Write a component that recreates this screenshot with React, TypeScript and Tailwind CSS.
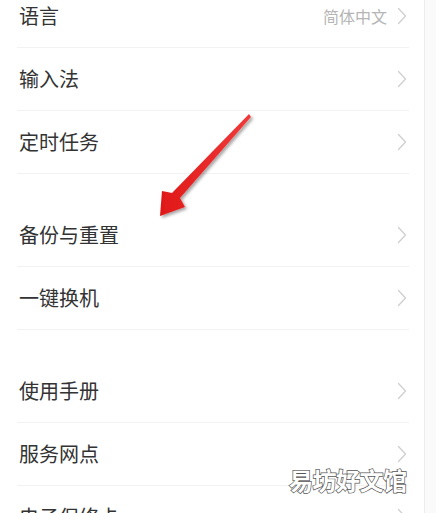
import React from "react";

const Chevron = () => (
  <svg width="10" height="18" viewBox="0 0 10 18" className="shrink-0">
    <path d="M1.5 1.5 L8.5 9 L1.5 16.5" fill="none" stroke="#cfcfcf" strokeWidth="1.3" strokeLinejoin="round" strokeLinecap="round" />
  </svg>
);

type RowProps = { label: string; value?: string };

const Row = ({ label, value }: RowProps) => (
  <div className="h-[63px] shrink-0 flex items-center justify-between border-b border-[#f2f2f2] ml-[17px] mr-[15px]">
    <span className="text-[20px] text-[#333333] ml-[2px] leading-none">{label}</span>
    <div className="flex items-center gap-[10px] mr-[2px]">
      {value && <span className="text-[16px] text-[#b5b5b5] leading-none">{value}</span>}
      <Chevron />
    </div>
  </div>
);

export default function App() {
  return (
    <div
      className="relative w-[436px] h-[513px] overflow-hidden bg-[#fafafa] flex items-start"
      style={{ fontFamily: '"Noto Sans CJK SC", "Noto Sans", sans-serif' }}
    >
      <div className="w-[425px] shrink-0 bg-white border-r border-[#ececec] -mt-[15px] flex flex-col">
        <Row label="语言" value="简体中文" />
        <Row label="输入法" />
        <Row label="定时任务" />
        <div className="h-[30px] shrink-0" />
        <Row label="备份与重置" />
        <Row label="一键换机" />
        <div className="h-[30px] shrink-0" />
        <Row label="使用手册" />
        <Row label="服务网点" />
        <Row label="电子保修卡" />
      </div>

      <svg className="absolute left-0 top-0 pointer-events-none" width="436" height="513" viewBox="0 0 436 513">
        <defs>
          <filter id="sh" x="-30%" y="-30%" width="160%" height="160%">
            <feDropShadow dx="2" dy="2" stdDeviation="1.5" floodColor="#000" floodOpacity="0.35" />
          </filter>
          <linearGradient id="rg" x1="0" y1="0" x2="1" y2="0">
            <stop offset="0" stopColor="#e01818" />
            <stop offset="1" stopColor="#f03a3a" />
          </linearGradient>
        </defs>
        <polygon
          points="249,114 251,117 180,198 185,207 160,216 162,191 172,193"
          fill="url(#rg)"
          filter="url(#sh)"
        />
      </svg>

      <div
        className="absolute left-[289px] top-[468px] text-[24px] leading-none text-white font-bold tracking-[-0.5px] [-webkit-text-stroke:1.4px_#555] [paint-order:stroke_fill]"
      >
        易坊好文馆
      </div>
    </div>
  );
}
